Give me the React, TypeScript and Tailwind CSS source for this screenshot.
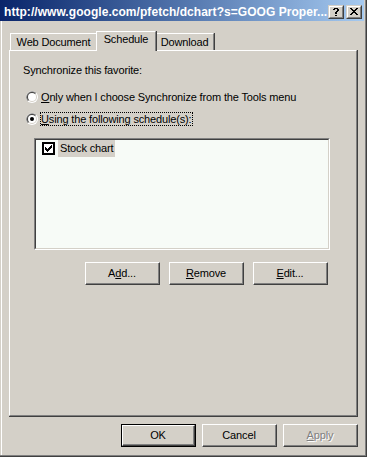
import React from "react";

const font = { fontFamily: '"Liberation Sans", Arial, sans-serif' };

function RaisedBtn({ children, isDefault }: { children: React.ReactNode; isDefault?: boolean }) {
  const inner = (
    <div className="h-full w-full border-t border-l border-b border-r border-t-white border-l-white border-r-[#404040] border-b-[#404040]">
      <div className="h-full w-full border-r border-b border-r-[#808080] border-b-[#808080] flex items-center justify-center text-[11px] leading-[13px] text-black">
        {children}
      </div>
    </div>
  );
  if (isDefault) {
    return <div className="w-[75px] h-[23px] border border-black">{inner}</div>;
  }
  return <div className="w-[75px] h-[23px]">{inner}</div>;
}

function CaptionBtn({ children }: { children: React.ReactNode }) {
  return (
    <div className="w-[16px] h-[14px] bg-[#d4d0c8] border-t border-l border-r border-b border-t-[#d4d0c8] border-l-[#d4d0c8] border-r-[#404040] border-b-[#404040]">
      <div className="w-full h-full border-t border-l border-r border-b border-t-white border-l-white border-r-[#808080] border-b-[#808080] flex items-center justify-center">
        {children}
      </div>
    </div>
  );
}

function CloseGlyph() {
  const rows = ["##....##", ".##..##.", "..####..", "...##...", "..####..", ".##..##.", "##....##"];
  return (
    <svg width="8" height="7" viewBox="0 0 8 7" shapeRendering="crispEdges">
      {rows.flatMap((r, y) =>
        r.split("").map((c, x) => (c === "#" ? <rect key={`${x}-${y}`} x={x} y={y} width="1" height="1" fill="#000" /> : null))
      )}
    </svg>
  );
}

function HelpGlyph() {
  const rows = [".####.", "##..##", "....##", "...##.", "..##..", "..##..", "......", "..##.."];
  return (
    <svg width="6" height="8" viewBox="0 0 6 8" shapeRendering="crispEdges">
      {rows.flatMap((r, y) =>
        r.split("").map((c, x) => (c === "#" ? <rect key={`${x}-${y}`} x={x} y={y} width="1" height="1" fill="#000" /> : null))
      )}
    </svg>
  );
}

function Radio({ checked }: { checked?: boolean }) {
  return (
    <svg width="12" height="12" viewBox="0 0 12 12" className="shrink-0">
      <circle cx="6" cy="6" r="6" fill="#ffffff" />
      <path d="M1.76 10.24 A6 6 0 0 1 10.24 1.76 Z" fill="#808080" />
      <circle cx="6" cy="6" r="5" fill="#d4d0c8" />
      <path d="M2.46 9.54 A5 5 0 0 1 9.54 2.46 Z" fill="#404040" />
      <circle cx="6" cy="6" r="4" fill="#ffffff" />
      {checked && <circle cx="6" cy="6" r="2" fill="#000" />}
    </svg>
  );
}

function CheckBox() {
  const rows = ["......#", ".....##", "#...###", "##.###.", "#####..", ".###...", "..#...."];
  return (
    <svg width="13" height="13" viewBox="0 0 13 13" shapeRendering="crispEdges" className="shrink-0">
      <rect x="0" y="0" width="13" height="13" fill="#000" />
      <rect x="2" y="2" width="9" height="9" fill="#fff" />
      {rows.flatMap((r, y) =>
        r.split("").map((c, x) => (c === "#" ? <rect key={`${x}-${y}`} x={x + 3} y={y + 3} width="1" height="1" fill="#000" /> : null))
      )}
    </svg>
  );
}

function Tab({ label, selected, width, first }: { label: string; selected?: boolean; width: number; first?: boolean }) {
  const style: React.CSSProperties = { width };
  if (selected) {
    return (
      <div style={style} className="relative z-10 -ml-[2px] -mb-px h-[20px] bg-[#d4d0c8] border-r border-r-[#404040]">
        <div className="h-full border-t border-l border-r border-t-white border-l-white border-r-[#808080] flex justify-center pt-[1px] text-[11px] leading-[13px]">
          {label}
        </div>
      </div>
    );
  }
  return (
    <div style={style} className={`${first ? "ml-[1px]" : "-ml-[2px]"} h-[17px] bg-[#d4d0c8] border-r border-r-[#404040]`}>
      <div className="h-full border-t border-l border-r border-t-white border-l-white border-r-[#808080] flex items-center justify-center text-[11px] leading-[13px]">
        {label}
      </div>
    </div>
  );
}

export default function App() {
  return (
    <div style={font} className="w-[367px] h-[457px] bg-[#d4d0c8] text-black tracking-[-0.15px] border-r border-b border-r-[#404040] border-b-[#404040]">
      <div className="w-full h-full flex flex-col border-r border-b border-r-[#808080] border-b-[#808080]">
        {/* Title bar */}
        <div className="h-[21px] mr-px shrink-0 bg-linear-to-r from-[#0a246a] to-[#a6caf0] flex items-center pl-[4px] pr-[2px] pt-[2px]">
          <div className="flex-1 overflow-hidden whitespace-nowrap text-white font-bold text-[12px] leading-[14px] tracking-[0.05px]">
            http://www.google.com/pfetch/dchart?s=GOOG Proper...
          </div>
          <div className="flex items-center gap-[2px]">
            <CaptionBtn>
              <HelpGlyph />
            </CaptionBtn>
            <CaptionBtn>
              <CloseGlyph />
            </CaptionBtn>
          </div>
        </div>

        {/* Body */}
        <div className="flex-1 ml-px border-l border-l-white pl-[7px] pr-[7px] pt-[10px] flex flex-col">
          {/* Tabs */}
          <div className="h-[19px] flex items-end">
            <Tab label="Web Document" width={88} first />
            <Tab label="Schedule" width={61} selected />
            <Tab label="Download" width={60} />
          </div>

          {/* Panel */}
          <div className="h-[367px] border-r border-b border-r-[#404040] border-b-[#404040]">
            <div className="h-full border-t border-l border-r border-b border-t-white border-l-white border-r-[#808080] border-b-[#808080] flex flex-col text-[11px]">
              <div className="ml-[13px] mt-[13px] leading-[13px]">Synchronize this favorite:</div>

              <div className="ml-[16px] mt-[14px] h-[12px] flex items-center">
                <Radio />
                <span className="ml-[3px] leading-[12px] whitespace-nowrap">
                  <span className="underline">O</span>nly when I choose Synchronize from the Tools menu
                </span>
              </div>

              <div className="ml-[16px] mt-[10px] h-[12px] flex items-center">
                <Radio checked />
                <span className="ml-[3px] leading-[12px] whitespace-nowrap outline outline-dotted outline-black">
                  <span className="underline">U</span>sing the following schedule(s):
                </span>
              </div>

              {/* List box */}
              <div className="ml-[24px] mt-[13px] w-[296px] h-[112px] border-t border-l border-r border-b border-t-[#808080] border-l-[#808080] border-r-white border-b-white">
                <div className="w-full h-full border-t border-l border-r border-b border-t-[#404040] border-l-[#404040] border-r-[#d4d0c8] border-b-[#d4d0c8] bg-[#f7fbf7]">
                  <div className="h-[17px] flex items-center pl-[6px]">
                    <CheckBox />
                    <span className="ml-[3px] h-[17px] px-[2px] bg-[#d4d0c8] flex items-center leading-[13px]">Stock chart</span>
                  </div>
                </div>
              </div>

              {/* Buttons */}
              <div className="ml-[75px] mt-[12px] flex gap-[9px]">
                <RaisedBtn>
                  <span>
                    A<span className="underline">d</span>d...
                  </span>
                </RaisedBtn>
                <RaisedBtn>
                  <span>
                    <span className="underline">R</span>emove
                  </span>
                </RaisedBtn>
                <RaisedBtn>
                  <span>
                    <span className="underline">E</span>dit...
                  </span>
                </RaisedBtn>
              </div>
            </div>
          </div>

          {/* Footer */}
          <div className="mt-[7px] flex justify-end gap-[6px]">
            <RaisedBtn isDefault>OK</RaisedBtn>
            <RaisedBtn>Cancel</RaisedBtn>
            <RaisedBtn>
              <span className="text-[#808080] [text-shadow:1px_1px_0_#ffffff]">
                <span className="underline">A</span>pply
              </span>
            </RaisedBtn>
          </div>
        </div>
      </div>
    </div>
  );
}
